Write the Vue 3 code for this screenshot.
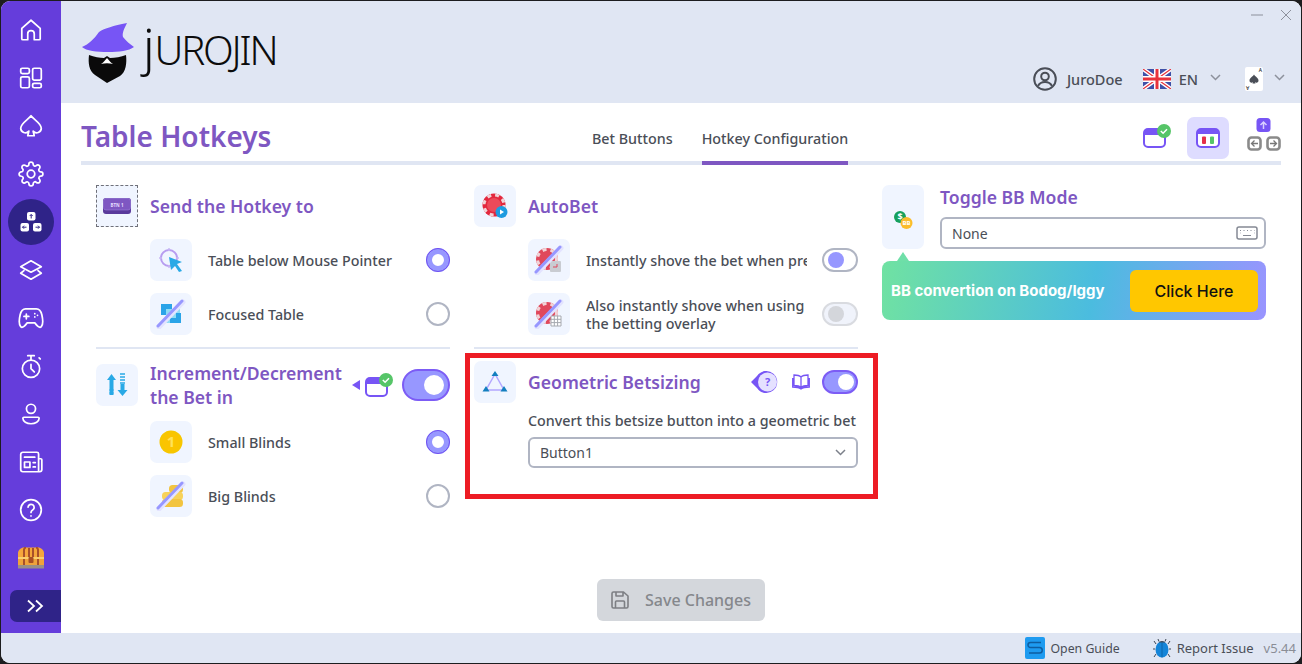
<script setup>
const navIcons = [
  'M3.500 10.500 12 3l8.500 7.500V20a1 1 0 0 1-1 1H15v-5.500a3 3 0 0 0-6 0V21H4.500a1 1 0 0 1-1-1z',
  'M4 3h5a1.500 1.500 0 0 1 1.500 1.500v2A1.500 1.500 0 0 1 9 8H4a1.500 1.500 0 0 1-1.500-1.500v-2A1.500 1.500 0 0 1 4 3zM4 11h5a1.500 1.500 0 0 1 1.500 1.500v7A1.500 1.500 0 0 1 9 21H4a1.500 1.500 0 0 1-1.500-1.500v-7A1.500 1.500 0 0 1 4 11zM15 3h5a1.500 1.500 0 0 1 1.500 1.500v8A1.500 1.500 0 0 1 20 14h-5a1.500 1.500 0 0 1-1.500-1.500v-8A1.500 1.500 0 0 1 15 3zM15 17h5a1.500 1.500 0 0 1 1.500 1.500v1A1.500 1.500 0 0 1 20 21h-5a1.500 1.500 0 0 1-1.500-1.500v-1A1.500 1.500 0 0 1 15 17z',
  'M12 2.500c2.500 3.500 9.500 7 9.500 11.500a4.300 4.300 0 0 1-7.500 2.800l1 4.200H9l1-4.200A4.300 4.300 0 0 1 2.500 14C2.500 9.500 9.500 6 12 2.500z',
  'M19.400 15a1.650 1.650 0 0 0 .33 1.820l.06.06a2 2 0 0 1 0 2.830 2 2 0 0 1-2.830 0l-.06-.06a1.650 1.650 0 0 0-1.820-.33 1.650 1.650 0 0 0-1 1.510V21a2 2 0 0 1-2 2 2 2 0 0 1-2-2v-.09A1.650 1.650 0 0 0 9 19.400a1.650 1.650 0 0 0-1.820.33l-.06.06a2 2 0 0 1-2.830 0 2 2 0 0 1 0-2.830l.06-.06a1.650 1.650 0 0 0 .33-1.820 1.650 1.650 0 0 0-1.510-1H3a2 2 0 0 1-2-2 2 2 0 0 1 2-2h.09A1.650 1.650 0 0 0 4.600 9a1.650 1.650 0 0 0-.33-1.820l-.06-.06a2 2 0 0 1 0-2.830 2 2 0 0 1 2.830 0l.06.06a1.650 1.650 0 0 0 1.820.33H9a1.650 1.650 0 0 0 1-1.510V3a2 2 0 0 1 2-2 2 2 0 0 1 2 2v.09a1.650 1.650 0 0 0 1 1.510 1.650 1.650 0 0 0 1.820-.33l.06-.06a2 2 0 0 1 2.830 0 2 2 0 0 1 0 2.830l-.06.06a1.650 1.650 0 0 0-.33 1.820V9a1.650 1.650 0 0 0 1.510 1H21a2 2 0 0 1 2 2 2 2 0 0 1-2 2h-.09a1.650 1.650 0 0 0-1.510 1zM12 8.500a3.500 3.500 0 1 0 0 7 3.500 3.500 0 0 0 0-7z',
  'keys',
  'M12 3.500 21.500 9 12 14 2.500 9zM5.500 12.500 2.500 15 12 20.500 21.500 15l-3-2.500',
  'M7 3.500h10c2.700 0 4.200 2 5 5.500.8 3.500 1.300 9-.5 11-1.800 1.800-4.300-1.300-6-3.500h-7C6.800 18.700 4.300 21.800 2.500 20 .7 18 1.200 12.500 2 9c.8-3.500 2.300-5.500 5-5.500zM5.500 10.500h4.500M7.700 8.300v4.400M15.500 8h.01M18 9.500h.01M15.500 11h.01',
  'M12 6.500a8 8 0 1 0 0 16 8 8 0 0 0 0-16zM12 10.500v4l3 3M9 2.500h6M12 2.500v4M19.500 4.500l1 1',
  'M12 3a4.200 4.200 0 1 0 0 8.400A4.200 4.200 0 0 0 12 3zM5.500 15h13c.8 0 1 .5 1 1 0 3-3.500 5-7.500 5s-7.500-2-7.500-5c0-.5.200-1 1-1z',
  'M4.500 3h13A1.500 1.500 0 0 1 19 4.500V21H4.500A2 2 0 0 1 2.500 19V5a2 2 0 0 1 2-2zM19 9h2a1 1 0 0 1 1 1v9a2 2 0 0 1-2 2h-1M6 12h5v5H6zM6 7.500h9.500M14 12.500h2M14 16.500h2',
  'M12 2.500a9.500 9.500 0 1 0 0 19 9.500 9.500 0 0 0 0-19zM9.300 9.300A2.800 2.800 0 1 1 13.500 12c-1 .6-1.500 1.200-1.500 2.200M12 17.500h.01',
  'chest'
]
</script>

<template>
  <div class="window">
    <div class="body">
      <nav class="sidebar">
        <div v-for="(d, i) in navIcons" :key="i" class="nav-item" :class="{ active: d === 'keys' }">
          <svg v-if="d === 'keys'" width="24" height="24" viewBox="0 0 24 24">
            <rect x="8" y="2" width="8.500" height="8.500" rx="2" fill="#fff" />
            <rect x="1.500" y="13" width="8.500" height="8.500" rx="2" fill="#fff" />
            <rect x="14" y="13" width="8.500" height="8.500" rx="2" fill="#fff" />
            <path d="M12.200 8.500v-4M10.700 6l1.500-1.500L13.700 6M7.500 17.200h-4M5 15.700l-1.500 1.500L5 18.700M16.500 17.200h4M19 15.700l1.500 1.500-1.500 1.500" fill="none" stroke="#2f2388" stroke-width="1" />
          </svg>
          <svg v-else-if="d === 'chest'" width="28" height="22" viewBox="0 0 28 22">
            <path d="M1 11V6c0-3 3-5.500 6-5.500h14c3 0 6 2.500 6 5.500v5z" fill="#f5a63c" />
            <path d="M7 11V3c0-1 1-2.500 2-2.500M12 11V1M16 11V1M21 11V3c0-1-1-2.500-2-2.500" fill="none" stroke="#a8502a" stroke-width="2" />
            <rect x="1" y="11" width="26" height="7" fill="#f0a23a" />
            <rect x="1" y="10" width="26" height="2" fill="#f9cf6e" />
            <path d="M7 12v6M21 12v6" stroke="#a8502a" stroke-width="2" />
            <rect x="1" y="18" width="26" height="3.500" fill="#9a8f86" />
            <rect x="11.500" y="10" width="5" height="6" rx="1" fill="#a84e24" />
          </svg>
          <svg v-else width="26" height="26" viewBox="0 0 24 24" fill="none" stroke="#fff" stroke-width="1.600" stroke-linecap="round" stroke-linejoin="round">
            <path :d="d" />
          </svg>
        </div>
        <div class="expand">
          <svg width="18" height="14" viewBox="0 0 18 14" fill="none" stroke="#fff" stroke-width="1.800">
            <path d="M2 1.500 8 7l-6 5.500M10 1.500 16 7l-6 5.500" />
          </svg>
        </div>
      </nav>

      <div class="main">
        <header class="header">
          <div class="logo">
            <svg width="54" height="62" viewBox="0 0 54 62">
              <path d="M1 26c7-3 12-8 17-15 6-4 14-6 28-9-3 6-5 10-4 14 3 4 7 7 11 10-5 4-15 5-26 5S5 30 1 26z" fill="#7755f5" />
              <path d="M8 34c5 2 11 3 15 3l3-2 3 2c5 0 11-1 16-3 1 8 0 17-6 21l-13 7-12-8C8 50 7 42 8 34z" fill="#0a0a0a" />
              <path d="M20 43c2-1 4-4 6-6 2 2 4 5 6 6-4-1-8-1-12 0z" fill="#fff" />
            </svg>
            <span class="wordmark"><span class="wordmark-j">j</span>UROJIN</span>
          </div>
          <div class="header-right">
            <div class="win-controls">
              <svg width="12" height="12" viewBox="0 0 12 12"><path d="M0 6h12" stroke="#a9adb8" stroke-width="1.500" /></svg>
              <svg width="12" height="12" viewBox="0 0 12 12"><path d="M1 1l10 10M11 1 1 11" stroke="#8d919c" stroke-width="1" /></svg>
            </div>
            <div class="user-row">
              <svg class="user-icon" width="24" height="24" viewBox="0 0 24 24" fill="none" stroke="#4a4e57" stroke-width="2">
                <circle cx="12" cy="12" r="10.800" />
                <circle cx="12" cy="9.500" r="3.800" />
                <path d="M5 19c1.500-3 4-4 7-4s5.500 1 7 4" />
              </svg>
              <span class="user-name">JuroDoe</span>
              <svg class="flag" width="28" height="20" viewBox="0 0 28 20">
                <rect width="28" height="20" rx="1" fill="#3f51a8" />
                <path d="M0 0l28 20M28 0 0 20" stroke="#fff" stroke-width="4" />
                <path d="M0 0l28 20M28 0 0 20" stroke="#e8333c" stroke-width="1.200" />
                <path d="M14 0v20M0 10h28" stroke="#fff" stroke-width="6" />
                <path d="M14 0v20M0 10h28" stroke="#e8333c" stroke-width="3" />
              </svg>
              <span class="lang">EN</span>
              <svg class="chev lang-chev" width="11" height="7" viewBox="0 0 11 7"><path d="M1 1l4.500 4.500L10 1" fill="none" stroke="#8d919c" stroke-width="1.500" /></svg>
              <div class="card">
                <span class="pip pip-top">A</span>
                <svg width="10" height="10" viewBox="0 0 10 10"><path d="M5 .5c1 2 4.500 3.500 4.500 6A2 2 0 0 1 6 8l.5 1.500h-3L4 8A2 2 0 0 1 .5 6.500C.5 4 4 2.500 5 .5z" fill="#4a4e57" /></svg>
                <span class="pip pip-bottom">A</span>
              </div>
              <svg class="chev card-chev" width="11" height="7" viewBox="0 0 11 7"><path d="M1 1l4.500 4.500L10 1" fill="none" stroke="#8d919c" stroke-width="1.500" /></svg>
            </div>
          </div>
        </header>

        <section class="content">
          <div class="title-row">
            <h1 class="page-title">Table Hotkeys</h1>
            <div class="tabs">
              <span class="tab">Bet Buttons</span>
              <span class="tab tab-active">Hotkey Configuration</span>
            </div>
            <div class="view-actions">
              <svg width="29" height="24" viewBox="0 0 29 24">
                <rect x="1" y="5" width="21" height="18" rx="4" fill="#fff" stroke="#7755f5" stroke-width="2" />
                <path d="M1 9V8a3 3 0 0 1 3-3h15a3 3 0 0 1 3 3v3H1z" fill="#7755f5" />
                <circle cx="21" cy="7" r="7" fill="#56c568" />
                <path d="M17.800 7l2.300 2.200 3.900-4" fill="none" stroke="#fff" stroke-width="1.500" />
              </svg>
              <div class="view-active">
                <svg width="24" height="20" viewBox="0 0 24 20">
                  <rect x="1" y="1" width="22" height="18" rx="4" fill="#fff" stroke="#7755f5" stroke-width="2" />
                  <path d="M1 6V5a4 4 0 0 1 4-4h14a4 4 0 0 1 4 4v1z" fill="#7755f5" />
                  <rect x="6" y="8.500" width="4" height="7.500" rx="1" fill="#e6304a" />
                  <rect x="14" y="8.500" width="4" height="7.500" rx="1" fill="#56c568" />
                </svg>
              </div>
              <svg class="keys-icon" width="34" height="33" viewBox="0 0 34 33">
                <rect x="9.500" y="0" width="14" height="14" rx="3.500" fill="#7755f5" />
                <rect x="1.500" y="19.500" width="12" height="12" rx="3" fill="#fff" stroke="#8a8a8a" stroke-width="2.600" />
                <rect x="20.500" y="19.500" width="12" height="12" rx="3" fill="#fff" stroke="#8a8a8a" stroke-width="2.600" />
                <path d="M16.500 11V4M13.500 7l3-3 3 3" fill="none" stroke="#d8d0ff" stroke-width="1.500" />
                <path d="M11 25.500H4.500M7.500 22.500l-3 3 3 3M23 25.500h6.500M26.500 22.500l3 3-3 3" fill="none" stroke="#777" stroke-width="1.300" />
              </svg>
            </div>
          </div>

          <div class="columns">
            <div class="col">
              <div class="block">
                <div class="heading">
                  <div class="tile tile-focus">
                    <svg width="28" height="16" viewBox="0 0 28 16">
                      <rect width="28" height="16" rx="3" fill="#5a3a9c" />
                      <rect x=".5" y=".5" width="27" height="11.500" rx="2.500" fill="#7e57c2" stroke="#9c82d8" stroke-width=".6" />
                      <text x="14" y="8.500" class="btn-label">BTN 1</text>
                    </svg>
                  </div>
                  <h2 class="heading-title">Send the Hotkey to</h2>
                </div>
                <div class="option">
                  <div class="tile">
                    <svg width="26" height="26" viewBox="0 0 26 26">
                      <circle cx="11" cy="11" r="8" fill="none" stroke="#b79cf0" stroke-width="2" />
                      <path d="M11 1v3M1 11h3M11 18v3M18 11h3" stroke="#c9b8f5" stroke-width="1.500" />
                      <path d="M11 10l13 5-5 2 5 7-3 1-4-6-4 4z" fill="#29a9e6" />
                    </svg>
                  </div>
                  <span class="option-label">Table below Mouse Pointer</span>
                  <span class="radio radio-on"></span>
                </div>
                <div class="option">
                  <div class="tile">
                    <svg width="30" height="30" viewBox="0 0 30 30">
                      <rect x="5" y="5" width="11" height="11" fill="#2ba4e8" />
                      <rect x="10" y="10" width="14" height="14" fill="#8fdcf5" />
                      <path d="M14 24h11V14h-5v5h-6z" fill="#2ba4e8" />
                      <path d="M3 28 27 3" stroke="#e3e3ff" stroke-width="5" stroke-linecap="round" />
                      <path d="M2 27 26 2" stroke="#9797ff" stroke-width="3" stroke-linecap="round" />
                    </svg>
                  </div>
                  <span class="option-label">Focused Table</span>
                  <span class="radio"></span>
                </div>
              </div>
              <hr class="rule" />
              <div class="block">
                <div class="heading">
                  <div class="tile">
                    <svg width="24" height="24" viewBox="0 0 24 24">
                      <path d="M6.500 1 11 7H8.500v15h-4V7H2z" fill="#29a9e6" />
                      <path d="M15 1h5M15 4h5M15 7h5M15 10h5M4.500 17h4M4.500 20h4" stroke="#29a9e6" stroke-width="1.500" />
                      <path d="M17.500 23 12.500 17h3V11h4v6h3z" fill="#29a9e6" />
                    </svg>
                  </div>
                  <h2 class="heading-title heading-wrap">Increment/Decrement the Bet in</h2>
                  <div class="heading-side">
                    <svg class="hint-arrow" width="9" height="10" viewBox="0 0 9 10"><path d="M0 5 8 0v10z" fill="#7755f5" /></svg>
                    <svg width="29" height="24" viewBox="0 0 29 24">
                      <rect x="1" y="5" width="21" height="18" rx="4" fill="#fff" stroke="#7755f5" stroke-width="2" />
                      <path d="M1 9V8a3 3 0 0 1 3-3h15a3 3 0 0 1 3 3v3H1z" fill="#7755f5" />
                      <circle cx="21" cy="7" r="7" fill="#56c568" />
                      <path d="M17.800 7l2.300 2.200 3.900-4" fill="none" stroke="#fff" stroke-width="1.500" />
                    </svg>
                    <span class="toggle toggle-big toggle-on"><span class="knob"></span></span>
                  </div>
                </div>
                <div class="option">
                  <div class="tile">
                    <svg width="24" height="24" viewBox="0 0 24 24">
                      <circle cx="12" cy="12" r="11.500" fill="#f7c600" />
                      <circle cx="12" cy="12" r="8.500" fill="#fbc400" />
                      <text x="12" y="17" class="coin-label">1</text>
                    </svg>
                  </div>
                  <span class="option-label">Small Blinds</span>
                  <span class="radio radio-on"></span>
                </div>
                <div class="option">
                  <div class="tile">
                    <svg width="30" height="30" viewBox="0 0 30 30">
                      <rect x="13" y="4" width="14" height="8" rx="3.500" fill="#f2c440" />
                      <rect x="6" y="11" width="21" height="8" rx="3.500" fill="#f7d25a" />
                      <rect x="6" y="18" width="21" height="8" rx="3.500" fill="#f2c440" />
                      <path d="M3 28 27 3" stroke="#e3e3ff" stroke-width="5" stroke-linecap="round" />
                      <path d="M2 27 26 2" stroke="#9797ff" stroke-width="3" stroke-linecap="round" />
                    </svg>
                  </div>
                  <span class="option-label">Big Blinds</span>
                  <span class="radio"></span>
                </div>
              </div>
            </div>

            <div class="col">
              <div class="block">
                <div class="heading">
                  <div class="tile">
                    <svg width="26" height="26" viewBox="0 0 26 26">
                      <circle cx="12" cy="12" r="11.500" fill="#e3283e" />
                      <circle cx="12" cy="12" r="10" fill="none" stroke="#f1d4d8" stroke-width="3" stroke-dasharray="4 4" />
                      <circle cx="12" cy="12" r="7" fill="#ec4a5a" />
                      <circle cx="19.500" cy="19" r="6" fill="#1e9be0" />
                      <path d="M18 16.500v5l4-2.500z" fill="#fff" />
                    </svg>
                  </div>
                  <h2 class="heading-title">AutoBet</h2>
                </div>
                <div class="option">
                  <div class="tile">
                    <svg width="30" height="30" viewBox="0 0 30 30">
                      <circle cx="13" cy="14" r="11" fill="#e0485c" />
                      <circle cx="13" cy="14" r="9.500" fill="none" stroke="#f1d4d8" stroke-width="3" stroke-dasharray="4 4" />
                      <rect x="16" y="16" width="11" height="11" rx="1" fill="#c9ccd2" />
                      <path d="M19 22h4v-3" fill="none" stroke="#e0485c" stroke-width="1" />
                      <path d="M3 28 27 3" stroke="#e3e3ff" stroke-width="5" stroke-linecap="round" />
                      <path d="M2 27 26 2" stroke="#9797ff" stroke-width="3" stroke-linecap="round" />
                    </svg>
                  </div>
                  <span class="option-label clipped">Instantly shove the bet when pressed</span>
                  <span class="toggle toggle-off"><span class="knob"></span></span>
                </div>
                <div class="option">
                  <div class="tile">
                    <svg width="30" height="30" viewBox="0 0 30 30">
                      <circle cx="13" cy="14" r="11" fill="#e0485c" />
                      <circle cx="13" cy="14" r="9.500" fill="none" stroke="#f1d4d8" stroke-width="3" stroke-dasharray="4 4" />
                      <path d="M17 17h10v10H17zM20.300 17v10M23.600 17v10M17 20.300h10M17 23.600h10" fill="#fff" stroke="#a6a9b0" stroke-width="1" />
                      <path d="M3 28 27 3" stroke="#e3e3ff" stroke-width="5" stroke-linecap="round" />
                      <path d="M2 27 26 2" stroke="#9797ff" stroke-width="3" stroke-linecap="round" />
                    </svg>
                  </div>
                  <span class="option-label clipped two-line">Also instantly shove when using the betting overlay</span>
                  <span class="toggle toggle-disabled"><span class="knob"></span></span>
                </div>
              </div>
              <hr class="rule" />
              <div class="block geo">
                <div class="red-box"></div>
                <div class="heading">
                  <div class="tile">
                    <svg width="26" height="24" viewBox="0 0 26 24">
                      <path d="M13 4 4 20h18z" fill="none" stroke="#b3a7ff" stroke-width="1.500" />
                      <path d="M13 1l3.500 5h-7zM4 16l3.500 5.500H.500zM22 16l3.500 5.500h-7z" fill="#137fbf" />
                    </svg>
                  </div>
                  <h2 class="heading-title">Geometric Betsizing</h2>
                  <div class="heading-side geo-side">
                    <svg width="29" height="24" viewBox="0 0 29 24">
                      <path d="M0 12 6 6a11 11 0 1 1 0 12z" fill="#7755f5" />
                      <circle cx="16.500" cy="12" r="9.500" fill="#e5e1ff" />
                      <text x="16.500" y="16" class="help-label">?</text>
                    </svg>
                    <svg width="18" height="16" viewBox="0 0 18 16" fill="none" stroke="#7755f5" stroke-width="1.300" class="book">
                      <path d="M9 3C7.500 1.500 5 1 2 1v10.500c3 0 5.500.5 7 2 1.500-1.500 4-2 7-2V1c-3 0-5.500.5-7 2zM9 3v10.500M.7 4v9c3 0 6.300.3 8.300 2 2-1.700 5.300-2 8.300-2V4" />
                    </svg>
                    <span class="toggle toggle-on"><span class="knob"></span></span>
                  </div>
                </div>
                <div class="geo-body">
                  <label class="geo-label">Convert this betsize button into a geometric bet</label>
                  <div class="field field-select">
                    <span>Button1</span>
                    <svg width="11" height="7" viewBox="0 0 11 7"><path d="M1 1l4.500 4.500L10 1" fill="none" stroke="#7c808a" stroke-width="1.500" /></svg>
                  </div>
                </div>
              </div>
            </div>

            <div class="col">
              <div class="bb-row">
                <div class="tile tile-tall">
                  <svg width="20" height="20" viewBox="0 0 20 20">
                    <circle cx="7" cy="7" r="6" fill="#16a05d" />
                    <text x="7" y="10" class="bb-s">$</text>
                    <circle cx="13.500" cy="13" r="6" fill="#fbbc2c" />
                    <text x="13.500" y="15" class="bb-b">BB</text>
                  </svg>
                </div>
                <div class="bb-main">
                  <h2 class="heading-title">Toggle BB Mode</h2>
                  <div class="field field-hotkey">
                    <span>None</span>
                    <svg width="22" height="14" viewBox="0 0 22 14" fill="none" stroke="#858994" stroke-width="1.500">
                      <rect x="1" y="1" width="20" height="12" rx="2" />
                      <path d="M4 4.500h1M7.500 4.500h1M11 4.500h1M14.500 4.500h1M18 4.500h.5M4 7h.5M18 7h.5M7 9.500h8" stroke-width="1.200" />
                    </svg>
                  </div>
                </div>
              </div>
              <div class="promo">
                <span class="promo-text">BB convertion on Bodog/Iggy</span>
                <span class="promo-btn">Click Here</span>
              </div>
            </div>
          </div>

          <div class="save-row">
            <button class="save-btn" type="button" disabled>
              <svg width="18" height="18" viewBox="0 0 18 18" fill="none" stroke="#7d7f84" stroke-width="1.600" stroke-linejoin="round">
                <path d="M2.500 1h10L17 5v10.500a1.500 1.500 0 0 1-1.500 1.500h-13A1.500 1.500 0 0 1 1 15.500v-13A1.500 1.500 0 0 1 2.500 1zM5 1v4h7V1M4.500 17v-6a1 1 0 0 1 1-1h7a1 1 0 0 1 1 1v6" />
              </svg>
              Save Changes
            </button>
          </div>
        </section>
      </div>
    </div>

    <footer class="status">
      <span class="status-link guide">
        <svg width="20" height="22" viewBox="0 0 20 22">
          <rect width="20" height="22" rx="2" fill="#1e9bf0" />
          <path d="M16 5.500H5.500a2 2 0 0 0 0 5h9a2.500 2.500 0 0 1 0 5.500H4" fill="none" stroke="#0e5da0" stroke-width="1.500" />
        </svg>
        Open Guide
      </span>
      <span class="status-link report">
        <svg width="18" height="22" viewBox="0 0 18 22">
          <path d="M3 7 1 4M15 7l2-3M2 12H0M16 12h2M3 17l-2 3M15 17l2 3" stroke="#3c4654" stroke-width="1" />
          <path d="M6 4.500 5 2M12 4.500 13 2" stroke="#3c4654" stroke-width="1" />
          <ellipse cx="9" cy="12.500" rx="6.500" ry="8" fill="#1585d8" />
          <path d="M5.500 5.500a4 3 0 0 1 7 0z" fill="#3c4654" />
          <path d="M9 6v14.500" stroke="#0b5da0" stroke-width=".8" />
        </svg>
        Report Issue
      </span>
      <span class="version">v5.44</span>
    </footer>
  </div>
</template>

<style>
html,
body {
  margin: 0;
  background: #1d1d1f;
}
</style>

<style scoped>
* {
  box-sizing: border-box;
}

.window {
  width: 1300px;
  height: 662px;
  margin: 1px;
  display: flex;
  flex-direction: column;
  border-radius: 9px;
  overflow: hidden;
  background: #fff;
  font-family: "Noto Sans", "Open Sans", sans-serif;
  color: #4a4e57;
}

.body {
  flex: 1;
  display: flex;
  min-height: 0;
}

.sidebar {
  width: 60px;
  flex: none;
  display: flex;
  flex-direction: column;
  padding-top: 5px;
  background: #653ddb;
}

.nav-item {
  height: 48px;
  width: 46px;
  margin-left: 7px;
  display: flex;
  align-items: center;
  justify-content: center;
}

.nav-item.active {
  height: 46px;
  margin-top: 1px;
  margin-bottom: 1px;
  border-radius: 50%;
  background: #2f2388;
}

.expand {
  margin-top: auto;
  margin-bottom: 11px;
  margin-left: 9px;
  height: 32px;
  display: flex;
  align-items: center;
  justify-content: center;
  padding-right: 1px;
  background: #2f2388;
  border-radius: 7px 0 0 7px;
}

.main {
  flex: 1;
  min-width: 0;
  display: flex;
  flex-direction: column;
}

.header {
  height: 102px;
  flex: none;
  display: flex;
  justify-content: space-between;
  padding: 20px 16px 0 20px;
  background: #e0e6f3;
}

.logo {
  display: flex;
  align-items: flex-start;
  gap: 8px;
}

.wordmark {
  margin-top: 3px;
  font-family: "Noto Sans", sans-serif;
  font-weight: 300;
  font-size: 40px;
  line-height: 52px;
  letter-spacing: -2.200px;
  color: #0c0c0c;
}

.wordmark-j {
  font-size: 50px;
  line-height: 0;
  margin-right: 2px;
}

.header-right {
  margin-top: -14px;
  display: flex;
  flex-direction: column;
  align-items: flex-end;
}

.win-controls {
  display: flex;
  align-items: center;
  gap: 17px;
  height: 16px;
  margin-right: -7px;
}

.user-row {
  margin-top: 42px;
  display: flex;
  align-items: center;
  height: 28px;
  font-size: 14.500px;
  font-weight: 500;
}

.user-name {
  margin-left: 10px;
}

.flag {
  margin-left: 20px;
}

.lang {
  margin-left: 8px;
}

.lang-chev {
  margin-left: 12px;
  margin-top: -4px;
}

.card {
  position: relative;
  width: 18px;
  height: 24px;
  margin-left: 24px;
  display: flex;
  align-items: center;
  justify-content: center;
  background: #fff;
  border-radius: 2px;
}

.pip {
  position: absolute;
  font-size: 5px;
  line-height: 5px;
  color: #222;
}

.pip-top {
  top: 1px;
  right: 1px;
}

.pip-bottom {
  bottom: 1px;
  left: 1px;
  transform: rotate(180deg);
}

.card-chev {
  margin-left: 11px;
  margin-top: -4px;
}

.content {
  flex: 1;
  min-height: 0;
  display: flex;
  flex-direction: column;
  padding: 0 20px;
}

.title-row {
  height: 62px;
  flex: none;
  display: flex;
  align-items: center;
  padding-top: 8px;
  border-bottom: 4px solid #e0e6f3;
}

.page-title {
  width: 511px;
  margin: 0;
  font-size: 28px;
  font-weight: 600;
  line-height: 38px;
  color: #7e57c2;
}

.tabs {
  align-self: stretch;
  display: flex;
  gap: 29px;
  margin-bottom: -4px;
}

.tab {
  padding-top: 4px;
  display: flex;
  align-items: center;
  font-size: 14.300px;
  font-weight: 500;
  border-bottom: 4px solid transparent;
}

.tab-active {
  border-bottom-color: #7e57c2;
}

.view-actions {
  margin-left: auto;
  display: flex;
  align-items: center;
  gap: 15px;
}

.view-active {
  width: 42px;
  height: 42px;
  margin-top: 4px;
  display: flex;
  align-items: center;
  justify-content: center;
  border-radius: 7px;
  background: #dedcff;
}

.keys-icon {
  margin-left: 3px;
  margin-bottom: 4px;
}

.columns {
  flex: 1;
  min-height: 0;
  display: grid;
  grid-template-columns: 354px 384px 384px;
  gap: 24px;
  padding: 20px 0 0 15px;
}

.heading {
  display: flex;
  align-items: center;
  gap: 12px;
}

.heading-title {
  margin: 0;
  font-size: 17.600px;
  font-weight: 600;
  line-height: 24px;
  color: #7e57c2;
}

.heading-wrap {
  width: 190px;
}

.heading-side {
  margin-left: auto;
  display: flex;
  align-items: center;
}

.hint-arrow {
  margin-right: 4px;
}

.heading-side .toggle-big {
  margin-left: 8px;
}

.geo-side {
  gap: 12px;
}

.tile {
  width: 42px;
  height: 42px;
  flex: none;
  display: flex;
  align-items: center;
  justify-content: center;
  border-radius: 7px;
  background: #f0f5ff;
}

.tile-focus {
  border-radius: 0;
  outline: 1px dashed #6f7079;
  outline-offset: -1px;
}

.btn-label {
  font-size: 4.500px;
  font-weight: 700;
  fill: #e6ddff;
  text-anchor: middle;
}

.coin-label {
  font-size: 15px;
  font-weight: 700;
  fill: #ffe25a;
  text-anchor: middle;
}

.help-label {
  font-size: 11px;
  font-weight: 700;
  fill: #7755f5;
  text-anchor: middle;
}

.bb-s {
  font-size: 9px;
  font-weight: 700;
  fill: #fff;
  text-anchor: middle;
}

.bb-b {
  font-size: 6px;
  font-weight: 700;
  fill: #fff;
  text-anchor: middle;
}

.option {
  display: flex;
  align-items: center;
  margin-top: 12px;
  margin-left: 54px;
}

.option-label {
  margin-left: 16px;
  padding-top: 1px;
  font-size: 14.300px;
  font-weight: 500;
  line-height: 18px;
}

.clipped {
  width: 221px;
  overflow: hidden;
  white-space: nowrap;
}

.two-line {
  white-space: normal;
}

.radio {
  margin-left: auto;
  width: 24px;
  height: 24px;
  flex: none;
  border-radius: 50%;
  border: 2px solid #b0b5c3;
  background: #fff;
}

.radio-on {
  border: 6px solid #9797ff;
  outline: 1px solid #6f4ff0;
  outline-offset: -1px;
}

.toggle {
  margin-left: auto;
  width: 36px;
  height: 24px;
  flex: none;
  display: flex;
  align-items: center;
  padding: 0 4px;
  border-radius: 12px;
  border: 2px solid #b0b5c3;
}

.knob {
  width: 16px;
  height: 16px;
  border-radius: 50%;
}

.toggle-off .knob {
  background: #9797ff;
}

.toggle-disabled {
  border-color: #d9dbe0;
  background: #f0f3fb;
}

.toggle-disabled .knob {
  background: #d4d6db;
}

.toggle-on {
  justify-content: flex-end;
  border-color: #7c5cf5;
  background: #9797ff;
  padding: 0 2px;
}

.toggle-on .knob {
  background: #fff;
}

.toggle-big {
  width: 48px;
  height: 32px;
  border-radius: 16px;
  padding: 0 4px;
}

.toggle-big .knob {
  width: 20px;
  height: 20px;
}

.rule {
  margin: 12px 0;
  border: 0;
  height: 2px;
  background: #e0e6f3;
}

.geo {
  position: relative;
}

.red-box {
  position: absolute;
  left: -9px;
  top: -8px;
  width: 413px;
  height: 146px;
  border: 5px solid #ed1c24;
  pointer-events: none;
}

.geo-body {
  margin: 8px 0 0 54px;
}

.geo-label {
  display: block;
  font-size: 14.300px;
  font-weight: 500;
  line-height: 20px;
  white-space: nowrap;
}

.field {
  display: flex;
  align-items: center;
  justify-content: space-between;
  background: #fff;
  border: 2px solid #b0b5c3;
  border-radius: 6px;
  font-size: 14px;
}

.field-select {
  height: 31px;
  margin-top: 6px;
  padding: 0 10px;
}

.field-hotkey {
  height: 32px;
  margin-top: 8px;
  padding: 0 6px 0 10px;
}

.bb-row {
  display: flex;
  gap: 16px;
}

.tile-tall {
  height: 64px;
  padding-top: 6px;
}

.bb-main {
  flex: 1;
  min-width: 0;
}

.promo {
  position: relative;
  height: 59px;
  margin-top: 12px;
  display: flex;
  align-items: center;
  justify-content: space-between;
  padding: 0 8px 0 9px;
  border-radius: 8px;
  background: linear-gradient(100deg, #70e2a2 0%, #4bbcdf 55%, #9a94ff 100%);
}

.promo::before {
  content: "";
  position: absolute;
  left: 15px;
  top: -9px;
  border-left: 6px solid transparent;
  border-right: 6px solid transparent;
  border-bottom: 9px solid #6fdfa8;
}

.promo-text {
  font-family: Inter, "Noto Sans", sans-serif;
  font-size: 15px;
  font-weight: 700;
  color: #fff;
  white-space: nowrap;
}

.promo-btn {
  width: 128px;
  height: 42px;
  display: flex;
  align-items: center;
  justify-content: center;
  font-family: Inter, "Noto Sans", sans-serif;
  font-size: 16px;
  font-weight: 500;
  color: #111;
  background: #ffc700;
  border-radius: 6px;
}

.save-row {
  flex: none;
  display: flex;
  justify-content: center;
  padding-bottom: 12px;
}

.save-btn {
  width: 168px;
  height: 42px;
  display: flex;
  align-items: center;
  justify-content: center;
  gap: 16px;
  border: 0;
  border-radius: 6px;
  background: #d4d7dc;
  color: #85878c;
  font-family: inherit;
  font-size: 16px;
  font-weight: 500;
}

.status {
  height: 30px;
  flex: none;
  display: flex;
  align-items: center;
  padding-right: 5px;
  background: #e0e6f3;
  font-size: 13px;
}

.status-link {
  display: flex;
  align-items: center;
  gap: 6px;
}

.guide {
  margin-left: auto;
  font-size: 12.300px;
}

.report {
  margin-left: 33px;
}

.version {
  margin-left: 10px;
  color: #8a8d96;
}
</style>
